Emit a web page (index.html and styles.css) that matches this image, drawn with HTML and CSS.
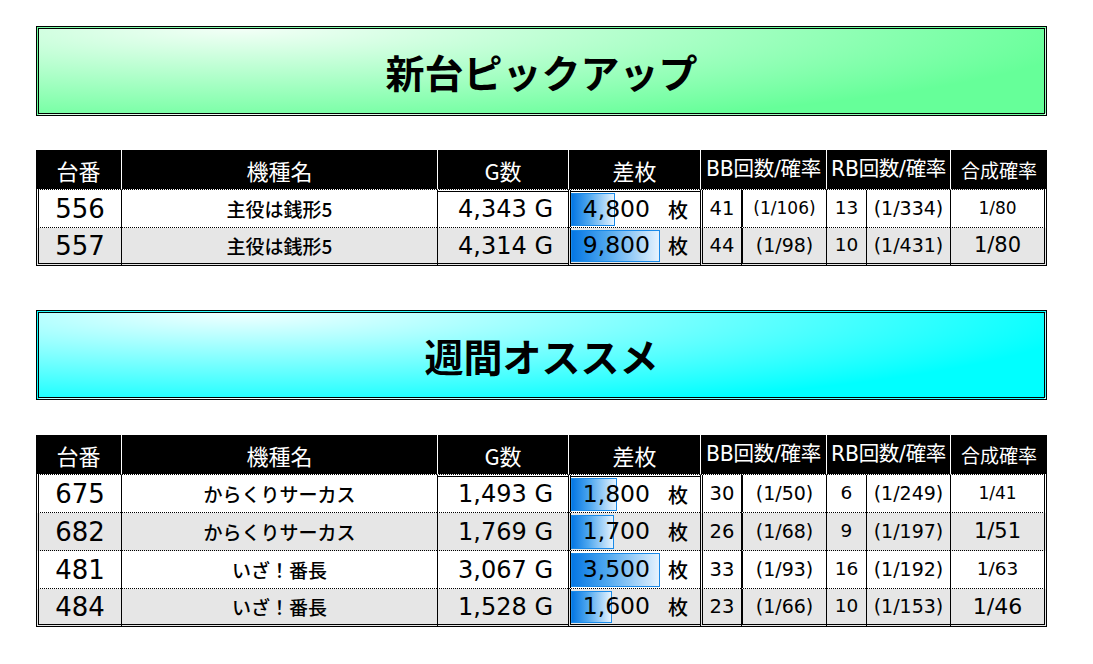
FILE: index.html
```html
<!DOCTYPE html>
<html lang="ja">
<head>
<meta charset="utf-8">
<title>新台ピックアップ / 週間オススメ</title>
<link rel="stylesheet" href="styles.css">
</head>
<body>
<div class="page">
  <div class="banner banner-green"><h1 class="banner-title">新台ピックアップ</h1></div>

  <div class="tbl tbl-first">
    <div class="row head">
      <div class="th">台番</div>
      <div class="th">機種名</div>
      <div class="th">G数</div>
      <div class="th">差枚</div>
      <div class="th th-span th-small">BB回数/確率</div>
      <div class="th th-span th-small">RB回数/確率</div>
      <div class="th th-xs">合成確率</div>
    </div>
    <div class="row odd first">
      <div class="td c-no">556</div>
      <div class="td c-name">主役は銭形5</div>
      <div class="td c-g">4,343 G</div>
      <div class="td c-diff"><span class="bar" style="width:44px"></span><span class="val">4,800</span><span class="unit">枚</span></div>
      <div class="td c-bbn">41</div>
      <div class="td c-bbp shrink">(1/106)</div>
      <div class="td c-rbn">13</div>
      <div class="td c-rbp">(1/334)</div>
      <div class="td c-tot p-sm">1/80</div>
    </div>
    <div class="row even last">
      <div class="td c-no">557</div>
      <div class="td c-name">主役は銭形5</div>
      <div class="td c-g">4,314 G</div>
      <div class="td c-diff"><span class="bar" style="width:89px"></span><span class="val">9,800</span><span class="unit">枚</span></div>
      <div class="td c-bbn">44</div>
      <div class="td c-bbp">(1/98)</div>
      <div class="td c-rbn">10</div>
      <div class="td c-rbp">(1/431)</div>
      <div class="td c-tot p-lg">1/80</div>
    </div>
  </div>

  <div class="banner banner-cyan"><h1 class="banner-title">週間オススメ</h1></div>

  <div class="tbl tbl-second">
    <div class="row head">
      <div class="th">台番</div>
      <div class="th">機種名</div>
      <div class="th">G数</div>
      <div class="th">差枚</div>
      <div class="th th-span th-small">BB回数/確率</div>
      <div class="th th-span th-small">RB回数/確率</div>
      <div class="th th-xs">合成確率</div>
    </div>
    <div class="row odd first">
      <div class="td c-no">675</div>
      <div class="td c-name">からくりサーカス</div>
      <div class="td c-g">1,493 G</div>
      <div class="td c-diff"><span class="bar" style="width:46px"></span><span class="val">1,800</span><span class="unit">枚</span></div>
      <div class="td c-bbn">30</div>
      <div class="td c-bbp">(1/50)</div>
      <div class="td c-rbn">6</div>
      <div class="td c-rbp">(1/249)</div>
      <div class="td c-tot p-sm">1/41</div>
    </div>
    <div class="row even">
      <div class="td c-no">682</div>
      <div class="td c-name">からくりサーカス</div>
      <div class="td c-g">1,769 G</div>
      <div class="td c-diff"><span class="bar" style="width:43px"></span><span class="val">1,700</span><span class="unit">枚</span></div>
      <div class="td c-bbn">26</div>
      <div class="td c-bbp">(1/68)</div>
      <div class="td c-rbn">9</div>
      <div class="td c-rbp">(1/197)</div>
      <div class="td c-tot p-lg">1/51</div>
    </div>
    <div class="row odd">
      <div class="td c-no">481</div>
      <div class="td c-name">いざ！番長</div>
      <div class="td c-g">3,067 G</div>
      <div class="td c-diff"><span class="bar" style="width:89px"></span><span class="val">3,500</span><span class="unit">枚</span></div>
      <div class="td c-bbn">33</div>
      <div class="td c-bbp">(1/93)</div>
      <div class="td c-rbn">16</div>
      <div class="td c-rbp">(1/192)</div>
      <div class="td c-tot p-md">1/63</div>
    </div>
    <div class="row even last">
      <div class="td c-no">484</div>
      <div class="td c-name">いざ！番長</div>
      <div class="td c-g">1,528 G</div>
      <div class="td c-diff"><span class="bar" style="width:41px"></span><span class="val">1,600</span><span class="unit">枚</span></div>
      <div class="td c-bbn">23</div>
      <div class="td c-bbp">(1/66)</div>
      <div class="td c-rbn">10</div>
      <div class="td c-rbp">(1/153)</div>
      <div class="td c-tot p-xl">1/46</div>
    </div>
  </div>
</div>
</body>
</html>
```

FILE: styles.css
```css
* { box-sizing: border-box; }

html, body {
  margin: 0;
  padding: 0;
  background: #fff;
}

body {
  font-family: "DejaVu Sans", "Noto Sans CJK JP", sans-serif;
  color: #000;
}

.page {
  display: flex;
  flex-direction: column;
  padding: 26px 0 0 36px;
}

.banner {
  width: 1011px;
  height: 90px;
  border: 3px double #000;
  display: flex;
  align-items: center;
  justify-content: center;
}

.banner-green {
  background: radial-gradient(ellipse 85% 120% at 20% 0%, #f3fff7 0%, #66ff99 100%);
}

.banner-cyan {
  margin-top: 44px;
  background: radial-gradient(ellipse 85% 120% at 20% 0%, #f2ffff 0%, #00ffff 100%);
}

.banner-title {
  margin: 0;
  font-family: "Noto Sans CJK JP", sans-serif;
  font-weight: 700;
  font-size: 39px;
  line-height: 1;
  letter-spacing: 0;
}

.tbl {
  width: 1011px;
  display: flex;
  flex-direction: column;
  background: #fff;
}

.tbl-first { margin-top: 34px; }
.tbl-second { margin-top: 35px; }

.row {
  display: grid;
  grid-template-columns: 85px 316px 131px 132px 41px 85px 40px 84px 97px;
}

.head .th {
  height: 40px;
  background: #000;
  background-clip: padding-box;
  color: #fff;
  border-bottom: 1px dotted #000;
  border-left: 1px solid #fff;
  display: flex;
  align-items: center;
  justify-content: center;
  font-family: "Noto Sans CJK JP", sans-serif;
  font-size: 22px;
  line-height: 1;
  white-space: nowrap;
}

.head .th:first-child { border-left: 0; }

.head .th-span { grid-column: span 2; }

.head .th-small {
  font-family: "DejaVu Sans", "Noto Sans CJK JP", sans-serif;
  font-size: 20.5px;
  letter-spacing: -0.3px;
}

.head .th-xs { font-size: 19px; }

.td {
  height: 38px;
  border-bottom: 1px dotted #000;
  display: flex;
  align-items: center;
  justify-content: center;
  white-space: nowrap;
  line-height: 1;
  font-size: 18px;
}

.odd .td { background: #fff; }
.even .td { background: #e6e6e6; }

.last .td { border-bottom: 3px double #000; }

.c-no {
  border-left: 3px double #000;
  font-size: 26px;
}

.c-name {
  border-left: 1px solid #000;
  font-family: "Noto Sans CJK JP", sans-serif;
  font-weight: 500;
  font-size: 19px;
}

.c-g {
  border-left: 1px solid #000;
  justify-content: flex-end;
  padding-right: 15px;
  font-size: 24px;
}

.c-diff {
  border-left: 3px double #000;
  display: grid;
  grid-template-columns: 1fr 32px;
  align-items: center;
  padding: 2px 0 1px;
}

.first .c-g,
.first .c-diff {
  box-shadow: inset 0 1px 0 #fff, inset 0 2px 0 #000;
}

.first .c-diff { padding-top: 3px; }

.bar {
  grid-row: 1;
  grid-column: 1 / -1;
  justify-self: start;
  align-self: stretch;
  border: 1px solid #1a8ae8;
  background: linear-gradient(90deg, #0577e4 0%, #4ea7ef 40%, #e6f3fe 100%);
}

.val {
  grid-row: 1;
  grid-column: 1;
  justify-self: end;
  padding-right: 18px;
  font-size: 23.5px;
}

.unit {
  grid-row: 1;
  grid-column: 2;
  font-family: "Noto Sans CJK JP", sans-serif;
  font-weight: 500;
  font-size: 20px;
}

.c-bbn {
  border-left: 3px double #000;
  font-size: 19.5px;
}

.c-bbp {
  border-left: 2px solid #000;
  font-size: 19px;
}

.c-bbp.shrink { font-size: 17px; }

.c-rbn {
  border-left: 1px solid #000;
  font-size: 18.5px;
}

.c-rbp {
  border-left: 1px solid #000;
  font-size: 19px;
}

.c-tot {
  border-left: 1px solid #000;
  border-right: 3px double #000;
}

.p-sm { font-size: 17px; }
.p-md { font-size: 18.5px; }
.p-lg { font-size: 21px; }
.p-xl { font-size: 22px; }
```
